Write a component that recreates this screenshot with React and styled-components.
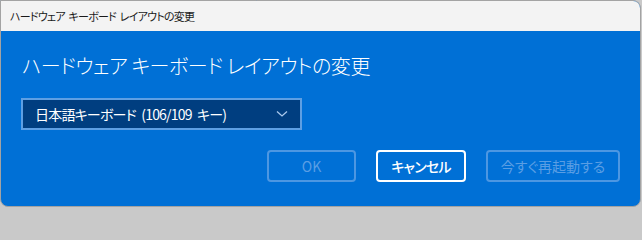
import React from "react";
import styled, { createGlobalStyle } from "styled-components";

const Global = createGlobalStyle`
  html, body { margin: 0; padding: 0; background: #c9c9c9; }
  body { font-family: "Noto Sans CJK JP", "Noto Sans", sans-serif; font-feature-settings: "palt"; }
`;

const Window = styled.div`
  width: 641px;
  height: 207px;
  box-sizing: border-box;
  border: 1px solid #a3a3a3;
  border-radius: 0 8px 8px 8px;
  overflow: hidden;
  display: flex;
  flex-direction: column;
  background: #0070d6;
`;

const TitleBar = styled.div`
  height: 30px;
  flex: none;
  background: #f3f3f3;
  display: flex;
  align-items: center;
  padding-left: 9px;
  font-size: 11px;
  color: #1a1a1a;
  letter-spacing: -0.75px;
  word-spacing: 2px;
`;

const Body = styled.div`
  flex: 1;
  display: flex;
  flex-direction: column;
  padding: 21px 20px 0 20px;
`;

const Heading = styled.h1`
  margin: 0;
  font-size: 20px;
  font-weight: 300;
  color: #ffffff;
  line-height: 28px;
  padding-left: 1px;
  letter-spacing: -0.4px;
`;

const Select = styled.div`
  margin-top: 18px;
  width: 281px;
  height: 32px;
  box-sizing: border-box;
  border: 2px solid #5e9fe3;
  background: #003e80;
  display: flex;
  align-items: center;
  justify-content: space-between;
  padding: 0 12px 0 12px;
  color: #ffffff;
  font-size: 14px;
  letter-spacing: -0.8px;
  word-spacing: 3px;
`;

const Chevron = styled.svg`
  width: 12px;
  height: 8px;
`;

const ButtonRow = styled.div`
  margin-top: 20px;
  display: flex;
  justify-content: flex-end;
  gap: 20px;
`;

const Button = styled.div`
  height: 32px;
  width: ${(p) => p.$w}px;
  box-sizing: border-box;
  border: 2px solid ${(p) => (p.$active ? "#ffffff" : "#4d97e2")};
  border-radius: 4px;
  display: flex;
  align-items: center;
  justify-content: center;
  font-size: 14px;
  color: ${(p) => (p.$active ? "#ffffff" : "#5a9ee4")};
  font-weight: ${(p) => (p.$active ? 500 : 400)};
  letter-spacing: ${(p) => (p.$active ? "-0.8px" : "0")};
`;

export default function App() {
  return (
    <>
      <Global />
      <Window>
        <TitleBar>ハードウェア キーボード レイアウトの変更</TitleBar>
        <Body>
          <Heading>ハードウェア キーボード レイアウトの変更</Heading>
          <Select>
            <span>日本語キーボード (106/109 キー)</span>
            <Chevron viewBox="0 0 12 8">
              <path d="M1 1.5 L6 6 L11 1.5" fill="none" stroke="#a9c8ec" strokeWidth="1.3" />
            </Chevron>
          </Select>
          <ButtonRow>
            <Button $w={89}>OK</Button>
            <Button $w={90} $active>キャンセル</Button>
            <Button $w={134}>今すぐ再起動する</Button>
          </ButtonRow>
        </Body>
      </Window>
    </>
  );
}
